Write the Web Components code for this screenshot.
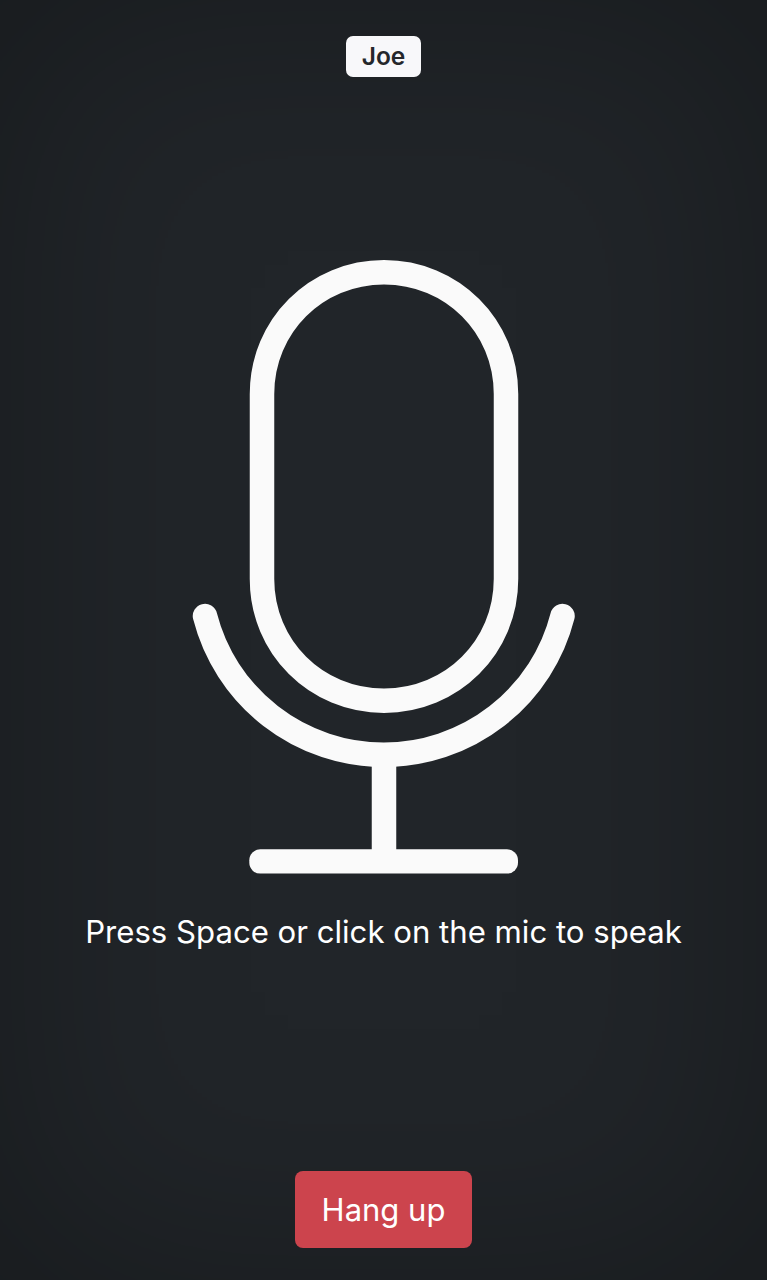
<!DOCTYPE html>
<html lang="en">
<head>
<meta charset="utf-8">
<title>Call</title>
<style>
  html, body { margin: 0; padding: 0; background: #212529; }
</style>
</head>
<body>
<call-screen>
  <name-badge slot="badge">Joe</name-badge>
  <mic-button slot="mic"></mic-button>
  <span slot="hint">Press Space or click on the mic to speak</span>
  <hang-up slot="action">Hang up</hang-up>
</call-screen>

<script>
// full window layout: badge on top, mic + hint, button at the bottom
class CallScreen extends HTMLElement {
    constructor() {
        super();
        this.attachShadow({ mode: 'open' });
        this.shadowRoot.innerHTML = `
      <style>
        :host {
          display: flex;
          flex-direction: column;
          align-items: center;
          box-sizing: border-box;
          width: 767px;
          height: 1280px;
          padding-top: 36px;
          background: #212529;
          box-shadow: inset 0 0 240px rgba(0, 0, 0, .3);
          color: #fff;
          font-family: Inter, "Liberation Sans", sans-serif;
          overflow: hidden;
        }
        .mic { margin-top: 183px; }
        .hint {
          margin-top: 35px;
          font-size: 31.15px;
          line-height: 46px;
          white-space: nowrap;
        }
        .action { margin-top: auto; margin-bottom: 32px; }
      </style>
      <slot name="badge"></slot>
      <div class="mic"><slot name="mic"></slot></div>
      <div class="hint"><slot name="hint"></slot></div>
      <div class="action"><slot name="action"></slot></div>
    `;
    }
}

class NameBadge extends HTMLElement {
    constructor() {
        super();
        this.attachShadow({ mode: 'open' });
        this.shadowRoot.innerHTML = `
      <style>
        :host {
          display: flex;
          align-items: center;
          justify-content: center;
          box-sizing: border-box;
          width: 75px;
          height: 41px;
          padding-bottom: 1px;
          background: #f8f8fa;
          border-radius: 7px;
          color: #25272b;
          font-size: 24.5px;
          font-weight: 600;
        }
      </style>
      <slot></slot>
    `;
    }
}

class MicButton extends HTMLElement {
    constructor() {
        super();
        this.attachShadow({ mode: 'open' });
        // viewBox is the window's x/y, shifted so the drawing starts at 0,0
        this.shadowRoot.innerHTML = `
      <style>
        :host { display: block; width: 384px; height: 614px; cursor: pointer; }
        svg { display: block; }
      </style>
      <svg width="384" height="614" viewBox="192 260 384 614" fill="none"
           stroke="#fafafa" stroke-width="24.5" stroke-linecap="round" aria-hidden="true">
        <path d="M262 394C262 326 316 272.300 384 272.300S506 326 506 394V579C506 647 452 700.700 384 700.700S262 647 262 579Z"/>
        <path d="M205 616A184.500 184.500 0 0 0 562.500 616"/>
        <path d="M384 756V855" stroke-linecap="butt"/>
        <rect x="249.300" y="849.300" width="268.700" height="24.300" rx="11" fill="#fafafa" stroke="none"/>
      </svg>
    `;
    }
}

class HangUp extends HTMLElement {
    constructor() {
        super();
        this.attachShadow({ mode: 'open' });
        this.shadowRoot.innerHTML = `
      <style>
        :host { display: block; }
        button {
          display: block;
          box-sizing: border-box;
          width: 177px;
          height: 77px;
          padding: 0;
          border: 0;
          border-radius: 8px;
          background: #cc444d;
          color: #fff;
          font: 400 31px Inter, "Liberation Sans", sans-serif;
        }
      </style>
      <button type="button"><slot></slot></button>
    `;
    }
}

customElements.define('call-screen', CallScreen);
customElements.define('name-badge', NameBadge);
customElements.define('mic-button', MicButton);
customElements.define('hang-up', HangUp);
</script>
</body>
</html>
